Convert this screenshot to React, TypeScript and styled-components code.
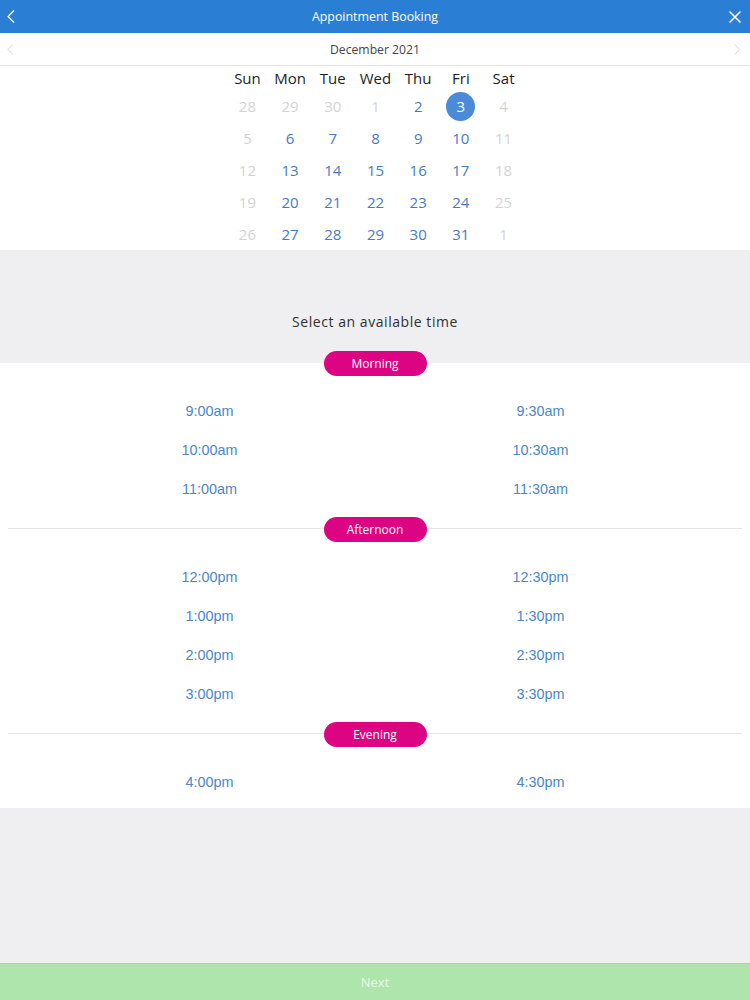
import React from 'react';
import styled, { createGlobalStyle } from 'styled-components';

const GlobalStyle = createGlobalStyle`
  html, body {
    margin: 0;
    padding: 0;
    background: #efeff2;
  }
  * {
    box-sizing: border-box;
  }
`;

const Page = styled.div`
  display: flex;
  flex-direction: column;
  min-height: 1000px;
  width: 750px;
  background: #efeff2;
  font-family: 'Open Sans', 'Liberation Sans', sans-serif;
`;

const TopBar = styled.div`
  display: grid;
  grid-template-columns: 40px 1fr 40px;
  align-items: center;
  height: 33px;
  background: #2a7fd5;
  color: #ffffff;
`;

const TopTitle = styled.div`
  text-align: center;
  font-size: 12.4px;
`;

const IconButton = styled.div<{ align: 'left' | 'right' }>`
  display: flex;
  align-items: center;
  justify-content: ${({ align }) => (align === 'left' ? 'flex-start' : 'flex-end')};
  padding: ${({ align }) => (align === 'left' ? '0 0 0 7px' : '0 9px 0 0')};
  height: 100%;
`;

const MonthBar = styled.div`
  display: grid;
  grid-template-columns: 40px 1fr 40px;
  align-items: center;
  height: 33px;
  background: #ffffff;
  border-bottom: 1px solid #e2e2e4;
`;

const MonthLabel = styled.div`
  text-align: center;
  font-size: 12.2px;
  color: #454545;
`;

const CalendarPanel = styled.div`
  display: flex;
  justify-content: center;
  background: #ffffff;
`;

const CalendarGrid = styled.div`
  display: grid;
  grid-template-columns: repeat(7, 42.7px);
  grid-auto-rows: 32px;
  grid-template-rows: 24px;
  margin-left: 1px;
`;

const WeekdayCell = styled.div`
  display: flex;
  align-items: center;
  justify-content: center;
  font-size: 15px;
  color: #1e1e1e;
`;

const DayCell = styled.div<{ tone: 'muted' | 'open' | 'selected' }>`
  display: flex;
  align-items: center;
  justify-content: center;
  font-size: 15px;
  color: ${({ tone }) => (tone === 'muted' ? '#d3d3d5' : tone === 'open' ? '#3f7dc7' : '#ffffff')};
`;

const SelectedDot = styled.span`
  display: flex;
  align-items: center;
  justify-content: center;
  width: 29px;
  height: 29px;
  border-radius: 50%;
  background: #4a8ad9;
  color: #ffffff;
`;

const PromptArea = styled.div`
  display: flex;
  align-items: flex-end;
  justify-content: center;
  height: 100px;
  padding-bottom: 19px;
`;

const Prompt = styled.div`
  font-size: 14px;
  letter-spacing: 0.55px;
  color: #2f2f2f;
`;

const SlotsPanel = styled.div`
  background: linear-gradient(#efeff2 13px, #ffffff 13px);
  padding-bottom: 7px;
`;

const PeriodHeader = styled.div<{ lined: boolean }>`
  position: relative;
  display: flex;
  justify-content: center;
  align-items: center;
  height: 26px;
  margin: 0 8px;

  &::before {
    content: '';
    position: absolute;
    left: 0;
    right: 0;
    top: 12px;
    height: 1px;
    background: ${({ lined }) => (lined ? '#e6e6e8' : 'transparent')};
  }
`;

const PeriodPill = styled.div`
  position: relative;
  display: flex;
  align-items: center;
  justify-content: center;
  width: 103px;
  height: 25px;
  border-radius: 13px;
  background: #dc0482;
  color: #ffffff;
  font-size: 12px;
`;

const SlotGrid = styled.div<{ last: boolean }>`
  display: grid;
  grid-template-columns: 1fr 1fr;
  grid-auto-rows: 39px;
  padding: 15px 44px ${({ last }) => (last ? '0' : '8px')} 44px;
`;

const Slot = styled.div`
  display: flex;
  align-items: center;
  justify-content: center;
  font-family: 'Liberation Sans', Arial, sans-serif;
  font-size: 14.4px;
  color: #4a87cb;
`;

const Filler = styled.div`
  flex: 1;
`;

const NextBar = styled.div`
  display: flex;
  align-items: center;
  justify-content: center;
  height: 37px;
  background: #ade5ad;
  border-top: 1px solid #a5dca5;
  color: #eaf8ea;
  font-size: 13px;
`;

const Chevron = ({ dir, color, size }: { dir: 'left' | 'right'; color: string; size: number }) => (
  <svg width={size * 0.6} height={size} viewBox="0 0 6 10" fill="none">
    <path
      d={dir === 'left' ? 'M5.2 0.6 L0.8 5 L5.2 9.4' : 'M0.8 0.6 L5.2 5 L0.8 9.4'}
      stroke={color}
      strokeWidth="0.9"
      strokeLinecap="round"
      strokeLinejoin="round"
    />
  </svg>
);

const CloseIcon = () => (
  <svg width="12" height="12" viewBox="0 0 12 12" fill="none">
    <path d="M1 1 L11 11 M11 1 L1 11" stroke="#ffffff" strokeWidth="1.6" strokeLinecap="round" />
  </svg>
);

const WEEKDAYS = ['Sun', 'Mon', 'Tue', 'Wed', 'Thu', 'Fri', 'Sat'];

type Day = { n: number; tone: 'muted' | 'open' | 'selected' };

function buildDays(): Day[] {
  const days: Day[] = [];
  [28, 29, 30].forEach((n) => days.push({ n, tone: 'muted' }));
  for (let n = 1; n <= 31; n++) {
    const col = (n + 2) % 7;
    const weekend = col === 0 || col === 6;
    let tone: Day['tone'] = weekend || n === 1 ? 'muted' : 'open';
    if (n === 3) tone = 'selected';
    days.push({ n, tone });
  }
  days.push({ n: 1, tone: 'muted' });
  return days;
}

const PERIODS = [
  { name: 'Morning', slots: ['9:00am', '9:30am', '10:00am', '10:30am', '11:00am', '11:30am'] },
  {
    name: 'Afternoon',
    slots: ['12:00pm', '12:30pm', '1:00pm', '1:30pm', '2:00pm', '2:30pm', '3:00pm', '3:30pm']
  },
  { name: 'Evening', slots: ['4:00pm', '4:30pm'] }
];

export default function App() {
  const days = buildDays();

  return (
    <Page>
      <GlobalStyle />
      <TopBar>
        <IconButton align="left">
          <Chevron dir="left" color="#ffffff" size={13} />
        </IconButton>
        <TopTitle>Appointment Booking</TopTitle>
        <IconButton align="right">
          <CloseIcon />
        </IconButton>
      </TopBar>

      <MonthBar>
        <IconButton align="left">
          <Chevron dir="left" color="#d4d4d6" size={11} />
        </IconButton>
        <MonthLabel>December 2021</MonthLabel>
        <IconButton align="right">
          <Chevron dir="right" color="#d4d4d6" size={11} />
        </IconButton>
      </MonthBar>

      <CalendarPanel>
        <CalendarGrid>
          {WEEKDAYS.map((d) => (
            <WeekdayCell key={d}>{d}</WeekdayCell>
          ))}
          {days.map((d, i) => (
            <DayCell key={i} tone={d.tone}>
              {d.tone === 'selected' ? <SelectedDot>{d.n}</SelectedDot> : d.n}
            </DayCell>
          ))}
        </CalendarGrid>
      </CalendarPanel>

      <PromptArea>
        <Prompt>Select an available time</Prompt>
      </PromptArea>

      <SlotsPanel>
        {PERIODS.map((p, i) => (
          <React.Fragment key={p.name}>
            <PeriodHeader lined={i > 0}>
              <PeriodPill>{p.name}</PeriodPill>
            </PeriodHeader>
            <SlotGrid last={i === PERIODS.length - 1}>
              {p.slots.map((s) => (
                <Slot key={s}>{s}</Slot>
              ))}
            </SlotGrid>
          </React.Fragment>
        ))}
      </SlotsPanel>

      <Filler />
      <NextBar>Next</NextBar>
    </Page>
  );
}
